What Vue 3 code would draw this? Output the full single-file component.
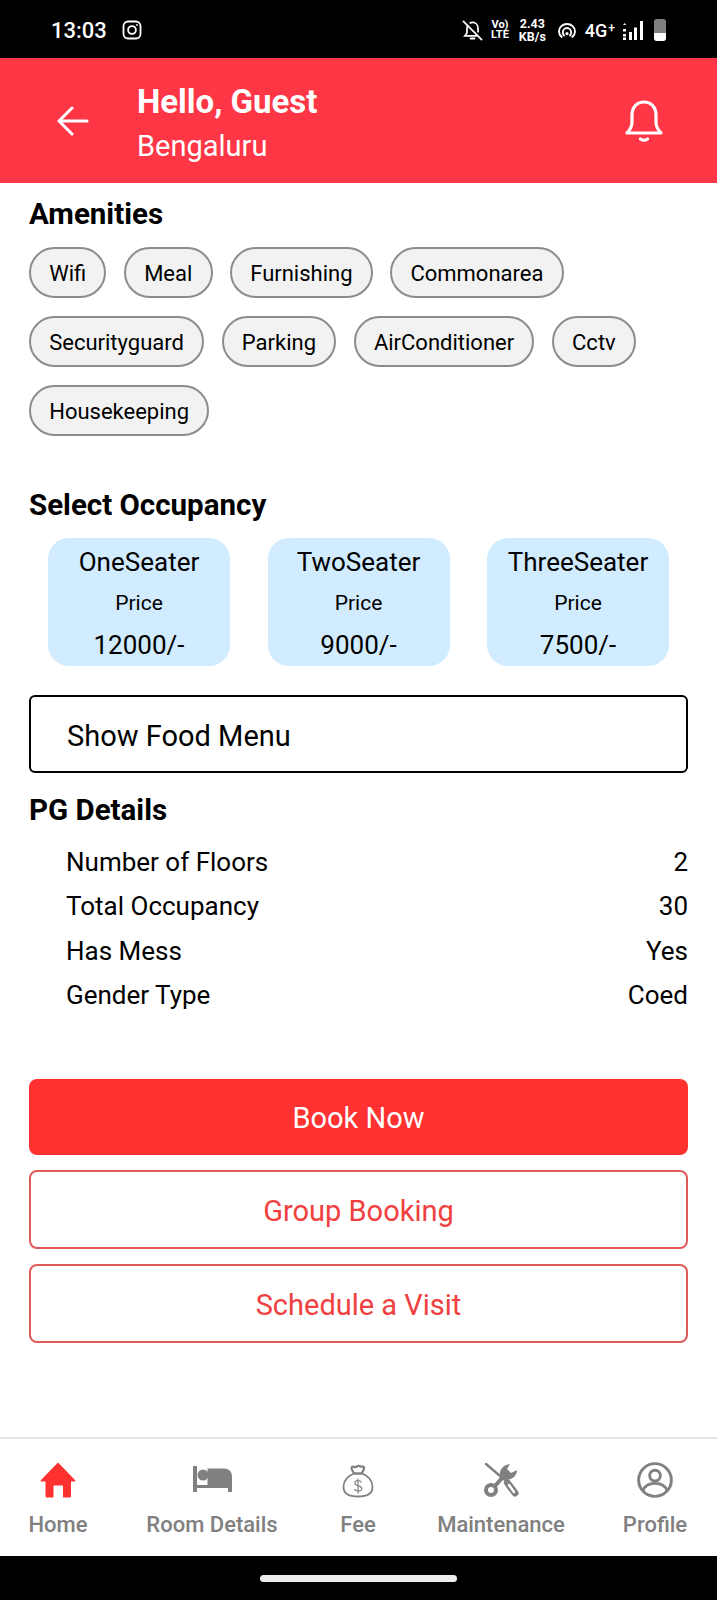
<script setup>
const amenities = ['Wifi', 'Meal', 'Furnishing', 'Commonarea', 'Securityguard', 'Parking', 'AirConditioner', 'Cctv', 'Housekeeping']

const occupancy = [
  { name: 'OneSeater', price: '12000/-' },
  { name: 'TwoSeater', price: '9000/-' },
  { name: 'ThreeSeater', price: '7500/-' },
]

const details = [
  { label: 'Number of Floors', value: '2' },
  { label: 'Total Occupancy', value: '30' },
  { label: 'Has Mess', value: 'Yes' },
  { label: 'Gender Type', value: 'Coed' },
]
</script>

<template>
  <div class="screen">
    <!-- phone status bar -->
    <div class="status">
      <span class="time">13:03</span>
      <svg class="insta" viewBox="0 0 20 20" fill="none" stroke="#fff" stroke-width="1.8">
        <rect x="1.5" y="1.5" width="17" height="17" rx="4.5" />
        <circle cx="10" cy="10" r="3.9" />
        <circle cx="15" cy="5" r="0.6" fill="#fff" stroke-width="0.8" />
      </svg>
      <div class="status-right">
        <svg class="bell-off" viewBox="0 0 22 22" fill="none" stroke="#fff" stroke-width="1.8">
          <path d="M1.5 1.5 20.5 20.5" stroke-linecap="round" />
          <path d="M6 5.6C5.4 6.8 5.2 8 5.2 9.4v4.2L3 16.6h13M8 3.6C8.8 3 9.8 2.6 11 2.6c3.4 0 5.8 2.8 5.8 6.6v4" />
          <path d="M9 19.4h4" stroke-linecap="round" stroke-width="2" />
        </svg>
        <div class="volte">
          <span>Vo)</span>
          <span>LTE</span>
        </div>
        <div class="speed">
          <span>2.43</span>
          <span>KB/s</span>
        </div>
        <svg class="hotspot" viewBox="0 0 18 15" fill="none" stroke="#fff" stroke-width="1.9">
          <path d="M4.2 14.6C2.2 13 1 10.8 1 8.4 1 4.3 4.6 1 9 1s8 3.3 8 7.4c0 2.4-1.2 4.6-3.2 6.2" />
          <path d="M6.6 13C5.4 12 4.8 10.8 4.8 9.4 4.8 7 6.7 5 9 5s4.2 2 4.2 4.4c0 1.4-.6 2.6-1.8 3.6" />
          <circle cx="9" cy="10.6" r="1.6" fill="#fff" stroke="none" />
        </svg>
        <span class="net">4G<sup>+</sup></span>
        <svg class="signal" viewBox="0 0 21 19" fill="#fff">
          <path d="M1 4 2.6 2 4.2 4zM1 8h3v2.400H1zM1 13h3v2.500H1zM1 16.500h3V19H1zM7 11h3v8H7zM12 6.500h3V19h-3zM18 0h3v19h-3z" />
        </svg>
        <div class="battery"><div class="battery-level"></div></div>
      </div>
    </div>

    <header class="header">
      <svg class="back" viewBox="0 0 32 30" fill="none" stroke="#fff" stroke-width="3" stroke-linecap="round" stroke-linejoin="round">
        <path d="M30 15H3M15 2 2 15l13 13" />
      </svg>
      <div class="greeting">
        <div class="hello">Hello, Guest</div>
        <div class="city">Bengaluru</div>
      </div>
      <svg class="bell" viewBox="0 0 38 42" fill="none" stroke="#fff" stroke-width="3.2" stroke-linecap="round" stroke-linejoin="round">
        <path d="M2 33h34c-3-3-5-6-5-11v-7C31 7.500 26 2 19 2S7 7.500 7 15v7c0 5-2 8-5 11z" />
        <path d="M15.500 39c2.300 1.600 4.700 1.600 7 0" />
      </svg>
    </header>

    <main class="content">
      <h2 class="heading">Amenities</h2>
      <div class="chips">
        <span v-for="a in amenities" :key="a" class="chip">{{ a }}</span>
      </div>

      <h2 class="heading occupancy-heading">Select Occupancy</h2>
      <div class="cards">
        <div v-for="o in occupancy" :key="o.name" class="card">
          <div class="card-name">{{ o.name }}</div>
          <div class="card-label">Price</div>
          <div class="card-price">{{ o.price }}</div>
        </div>
      </div>

      <div class="food">Show Food Menu</div>

      <h2 class="heading details-heading">PG Details</h2>
      <div class="details">
        <div v-for="d in details" :key="d.label" class="detail">
          <span>{{ d.label }}</span>
          <span>{{ d.value }}</span>
        </div>
      </div>

      <button class="btn primary">Book Now</button>
      <button class="btn outline">Group Booking</button>
      <button class="btn outline">Schedule a Visit</button>
    </main>

    <nav class="nav">
      <div class="nav-item active">
        <svg class="nav-icon" viewBox="0 0 36 36" fill="#ff3131">
          <path d="M18 .500 35.200 18.200c.5.800.1 1.300-.7 1.300H31v14.500c0 .9-.6 1.500-1.500 1.500H23V23.500h-9.500V35.500H7c-.9 0-1.500-.6-1.500-1.500V19.500H1.500c-.8 0-1.200-.5-.7-1.300z" />
        </svg>
        <span>Home</span>
      </div>
      <div class="nav-item">
        <svg class="nav-icon" viewBox="0 0 39 36" fill="#808080">
          <path d="M0 4h4v19h10.500V6.500H31c5 0 8 3 8 8V30h-4v-4H4v4H0z" />
          <circle cx="10" cy="13" r="5.500" />
        </svg>
        <span>Room Details</span>
      </div>
      <div class="nav-item">
        <svg class="nav-icon" viewBox="0 0 32 36" fill="none" stroke="#808080" stroke-width="1.800" stroke-linejoin="round">
          <path d="M12 11.500C5.500 14 1.500 19 1.500 25c0 6.500 4.500 9.500 14.500 9.500s14.500-3 14.500-9.500c0-6-4-11-10.500-13.500z" />
          <path d="M12 11.500c-1-2-3.500-5-2-6.500 1.500-1 2.500.5 4 0 1.500-1 3-2 4.500-.5 1 .5 2.500-.5 3.500.5.800 1.500-1.500 4.500-2 6.500z" stroke-width="2.200" />
          <path d="M19.500 20.500c-.8-1.500-2.200-2-3.500-2-1.800 0-3.200 1-3.200 2.600 0 3.600 7 1.800 7 5.400 0 1.600-1.600 2.500-3.800 2.500-1.500 0-3-.7-3.600-2M16 16.500v15" stroke-width="1.200" />
        </svg>
        <span>Fee</span>
      </div>
      <div class="nav-item">
        <svg class="nav-icon" viewBox="0 0 35 36" fill="none" stroke="#808080">
          <!-- screwdriver -->
          <path d="M2 2 22 19" stroke-width="2.400" stroke-linecap="round" />
          <path d="M23.500 21 31 31" stroke-width="7" stroke-linecap="round" />
          <path d="M25 23 30 30" stroke="#fff" stroke-width="2.400" stroke-linecap="round" />
          <!-- spanner -->
          <circle cx="7" cy="28" r="5" stroke-width="4" />
          <path d="M11 24 18 16" stroke-width="4" />
          <path d="M16 14C15 8 19 3 26 2l-3 5 4 4 6-3c0 6-5 10-12 10z" fill="#808080" stroke="none" />
        </svg>
        <span>Maintenance</span>
      </div>
      <div class="nav-item">
        <svg class="nav-icon" viewBox="0 0 37 37" fill="none" stroke="#808080" stroke-width="3">
          <circle cx="18.500" cy="18.500" r="16.800" />
          <circle cx="18.500" cy="14" r="5.500" />
          <path d="M6 30c1.500-5.500 6.500-8 12.500-8s11 2.500 12.500 8" />
        </svg>
        <span>Profile</span>
      </div>
    </nav>

    <div class="gesture"><div class="gesture-bar"></div></div>
  </div>
</template>

<style>
body {
  margin: 0;
  background: #fff;
}
</style>

<style scoped>
.screen {
  width: 717px;
  height: 1600px;
  display: flex;
  flex-direction: column;
  font-family: Roboto, "Liberation Sans", sans-serif;
  color: #000;
  overflow: hidden;
}

.status {
  height: 58px;
  flex: none;
  box-sizing: border-box;
  background: #000;
  color: #fff;
  display: flex;
  align-items: center;
  padding: 2px 51px 0 51px;
}
.time { font-size: 22px; font-weight: 500; }
.insta { width: 20px; height: 20px; margin-left: 15px; }
.status-right { margin-left: auto; display: flex; align-items: center; }
.bell-off { width: 21px; height: 21px; }
.volte {
  display: flex;
  flex-direction: column;
  align-items: center;
  margin-left: 8px;
  font-size: 11px;
  font-weight: 700;
  line-height: 10px;
}
.speed {
  display: flex;
  flex-direction: column;
  align-items: center;
  margin-left: 10px;
  font-size: 12.500px;
  font-weight: 700;
  line-height: 13px;
}
.hotspot { width: 18px; height: 15px; margin-left: 12px; }
.net { margin-left: 9px; font-size: 18px; font-weight: 500; }
.net sup { font-size: 12px; line-height: 0; vertical-align: 5px; margin-left: 1px; }
.signal { width: 21px; height: 19px; margin-left: 7px; }
.battery {
  width: 12px;
  height: 22px;
  margin-left: 11px;
  border-radius: 3px;
  background: #808080;
  display: flex;
  align-items: flex-end;
  overflow: hidden;
}
.battery-level { width: 100%; height: 8px; background: #fff; }

.header {
  height: 125px;
  flex: none;
  background: #ff3646;
  color: #fff;
  display: flex;
  align-items: center;
  padding: 0 54px 0 57px;
}
.back { width: 32px; height: 30px; }
.greeting { margin: 7px 0 0 48px; }
.hello { font-size: 33px; font-weight: 700; line-height: 42px; }
.city { font-size: 29px; line-height: 42px; margin-top: 2px; }
.bell { width: 38px; height: 42px; margin-left: auto; }

.content {
  flex: 1;
  padding: 15px 29px 0;
  display: flex;
  flex-direction: column;
}
.heading {
  margin: 0;
  font-size: 29.500px;
  font-weight: 700;
  line-height: 33px;
}
.chips {
  display: flex;
  flex-wrap: wrap;
  gap: 18px 17.500px;
  margin-top: 16px;
}
.chip {
  box-sizing: border-box;
  height: 51px;
  padding: 1px 18.200px 0;
  display: flex;
  align-items: center;
  font-size: 22px;
  border: 2px solid #8c8c8c;
  border-radius: 26px;
  background: #f2f2f2;
}
.occupancy-heading { margin-top: 53px; }
.cards {
  display: flex;
  gap: 37.500px;
  margin: 16px 18px 0 19px;
}
.card {
  width: 182px;
  height: 128px;
  box-sizing: border-box;
  padding-top: 6px;
  border-radius: 21px;
  background: #d1ebff;
  text-align: center;
}
.card-name, .card-price { font-size: 26px; line-height: 36px; }
.card-label { font-size: 21px; line-height: 36px; margin: 5px 0 6px; }
.food {
  box-sizing: border-box;
  height: 78px;
  margin-top: 29px;
  padding: 3px 0 0 36px;
  display: flex;
  align-items: center;
  font-size: 29px;
  border: 2px solid #000;
  border-radius: 6px;
}
.details-heading { margin-top: 21px; }
.details { margin-top: 13px; padding-left: 37px; }
.detail {
  display: flex;
  justify-content: space-between;
  font-size: 26px;
  line-height: 44.300px;
}
.btn {
  box-sizing: border-box;
  display: block;
  width: 100%;
  font-family: inherit;
  font-size: 29px;
  border-radius: 8px;
  padding: 2px 0 0;
}
.primary {
  height: 76px;
  margin-top: 62px;
  background: #ff3131;
  border: none;
  color: #fff;
}
.outline {
  height: 79px;
  margin-top: 15px;
  background: #fff;
  border: 2px solid #e05a5a;
  color: #f04040;
}

/* columns sized so each label sits centred under its tab position */
.nav {
  height: 119px;
  flex: none;
  box-sizing: border-box;
  border-top: 2px solid #e4e4e4;
  display: grid;
  grid-template-columns: 116px 192px 100px 186px 122px;
  background: #fff;
}
.nav-item {
  display: flex;
  flex-direction: column;
  align-items: center;
  color: #808080;
  font-size: 22px;
  font-weight: 500;
}
.nav-item span { margin-top: 14px; line-height: 26px; white-space: nowrap; }
.nav-icon { height: 36px; margin-top: 23px; }

.gesture {
  height: 44px;
  flex: none;
  background: #000;
  display: flex;
  justify-content: center;
  align-items: center;
}
.gesture-bar {
  width: 197px;
  height: 7px;
  border-radius: 4px;
  background: #ededed;
}
</style>
